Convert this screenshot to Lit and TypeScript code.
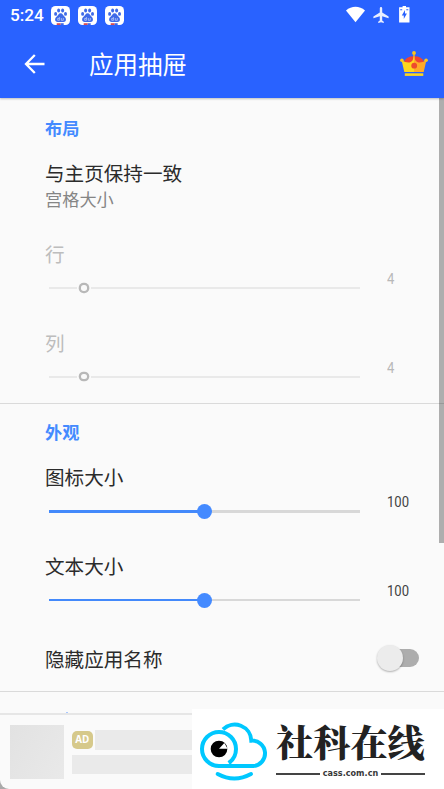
import { LitElement, html, css, svg } from "lit";
import { customElement, property } from "lit/decorators.js";

@customElement("slider-row")
class SliderRow extends LitElement {
  @property() label = "";
  @property({ type: Number }) value = 0;
  @property({ type: Number }) percent = 0;
  @property({ type: Boolean, reflect: true }) disabled = false;

  static styles = css`
    :host { display: grid; grid-template-columns: 342px 1fr; height: 88.7px; color: #2b2b2b; }
    .label { height: 26px; line-height: 26px; font-size: 19.6px; }
    .number { padding-top: 28px; font: 400 15.2px/20px Roboto, sans-serif; color: #424242; }
    .digits { display: inline-block; transform: scaleX(0.86); transform-origin: left; }
    .track { display: flex; align-items: center; height: 16px; margin: 13.5px 27px 0 4px; }
    .fill { height: 2.6px; background: #4389fb; }
    .knob { width: 15px; height: 15px; margin: 0 -7.5px; border-radius: 50%; background: #448aff; z-index: 1; flex: none; }
    .rest { flex: 1; height: 2.6px; background: #d8d8d8; }
    :host([disabled]) { color: #bdbdbd; }
    :host([disabled]) .number { color: #b8b8b8; }
    :host([disabled]) .track { margin-top: 13px; }
    :host([disabled]) .fill, :host([disabled]) .rest { background: #e9e9e9; height: 2.2px; }
    :host([disabled]) .knob { width: 5.4px; height: 5.4px; margin: 0 4.300px; background: #fafafa; box-shadow: 0 0 0 2.300px #b8b8b8; }
  `;

  render() {
    return html`
      <div>
        <div class="label">${this.label}</div>
        <div class="track">
          <div class="fill" style="width:${this.percent}%"></div>
          <div class="knob"></div>
          <div class="rest"></div>
        </div>
      </div>
      <div class="number"><span class="digits">${this.value}</span></div>
    `;
  }
}

const paw = () => svg`
  <rect width="19" height="19" rx="4.5" fill="#fff"/>
  <g fill="#3f6ae8">
    <ellipse cx="4.6" cy="7.9" rx="1.5" ry="1.9"/>
    <ellipse cx="7.6" cy="4.4" rx="1.5" ry="2"/>
    <ellipse cx="11.6" cy="4.4" rx="1.5" ry="2"/>
    <ellipse cx="14.5" cy="7.9" rx="1.5" ry="1.9"/>
    <path d="M9.6 7.3c2 0 2.5 2 3.8 3.1 2.4 2 2 5.5-.9 5.5H6.6c-3 0-3.3-3.6-.8-5.4C7.2 9.4 7.6 7.3 9.6 7.3z"/>
  </g>
  <path d="M8.4 11v3.4M8.4 12.4H6.7v1.9h1.7M10.3 12v2.3h2V12" fill="none" stroke="#dce5ff" stroke-width=".6"/>
  <path d="M5.7 17.2h4V19h-4z" fill="#d84b52"/>
  <path d="M9.7 17.2h3V19h-3z" fill="#3f6ae8"/>`;

@customElement("app-root")
class AppRoot extends LitElement {
  static styles = css`
    :host { display: block; width: 444px; height: 789px; overflow: hidden; font-family: "Noto Sans CJK SC", sans-serif; background: #fafafa; }
    .screen { position: relative; display: flex; flex-direction: column; height: 789px; }
    .header { flex: none; height: 98px; background: #2962ff; color: #fff; box-shadow: 0 1px 2px rgba(0,0,0,.25); z-index: 1; }
    .status { display: flex; align-items: center; height: 30px; padding: 0 30px 0 10px; }
    .time { width: 41px; font: 500 17.2px/30px Roboto, sans-serif; }
    .apps { display: flex; gap: 8px; flex: 1; }
    .signals { display: flex; align-items: center; margin-top: -2px; }
    .plane { margin: 2px 7px 0 8px; }
    .bar { display: flex; align-items: center; height: 68px; padding: 0 16px 0 24px; }
    .title { flex: 1; margin-left: 44px; font-size: 24.5px; line-height: 36px; font-weight: 400; }
    svg { display: block; flex: none; }
    .crown { margin-top: -1px; }
    .content { flex: none; height: 615px; overflow: hidden; }
    .section { box-sizing: border-box; padding-left: 45px; border-bottom: 1.5px solid #dadada; }
    .layout { height: 306px; padding-top: 17px; }
    .look { height: 287.5px; padding-top: 15px; }
    .heading { height: 26px; font-size: 17.2px; line-height: 26px; font-weight: 700; color: #448aff; }
    .item { padding: 19px 0 29px; color: #2b2b2b; }
    .name { font-size: 19.6px; line-height: 26px; color: #2b2b2b; }
    .hint { font-size: 17.2px; line-height: 26px; color: #858585; }
    .gap { height: 19px; }
    .toggle-row { display: flex; justify-content: space-between; align-items: center; height: 36px; padding-right: 25px; }
    .switch { display: flex; align-items: center; width: 41px; height: 18px; border-radius: 9px; background: linear-gradient(90deg, transparent 10px, #adadad 10px); margin-top: -3px; }
    .thumb { width: 26px; height: 26px; margin-left: -1px; border-radius: 50%; background: #ececec; box-shadow: 0 1px 2px rgba(0,0,0,.3); }
    .scroll { position: absolute; right: 0; top: 98px; width: 5px; height: 445px; background: rgba(0,0,0,.3); z-index: 2; }
    .peek { width: 2px; height: 1px; margin: 20px 0 0 65.5px; background: #a9c8ff; }
    .ad-shell { flex: 1; background: #aaa; }
    .ad { box-sizing: border-box; display: flex; height: 76px; padding: 10px 0 0 10px; border-top: 2px solid #e6e6e6; border-radius: 0 0 0 9px; background: #fafafa; }
    .picture { width: 54px; height: 54px; background: linear-gradient(120deg, #e2e2e2, #e9e9e9); }
    .lines { flex: 1; margin-left: 7.5px; }
    .line { display: flex; gap: 2px; padding-top: 5px; }
    .badge { width: 21.5px; height: 18px; margin-top: 1px; border-radius: 5px; background: #d6c98b; color: #fff; font: 700 9.8px/18.500px "Open Sans", sans-serif; text-align: center; }
    .bone { flex: 1; height: 20px; background: #eaeaea; }
    .second { height: 19px; margin-top: 5px; background: #eaeaea; }
    .watermark { position: absolute; right: 0; bottom: 0; z-index: 3; display: flex; width: 252px; height: 80px; background: #fff; }
    .brand { margin: 6px 0 0 4px; width: 152px; color: #222; }
    .brand-name { font: 900 37.2px/52px "Noto Serif CJK SC", "Noto Sans CJK SC", serif; white-space: nowrap; }
    .domain { display: flex; align-items: center; gap: 3px; width: 149px; font: 700 8.1px/12px "DejaVu Sans", sans-serif; color: #383838; }
    .rule { flex: 1; height: 2px; margin-top: 1px; background: #444; }
  `;

  render() {
    return html`
      <div class="screen">
        <div class="header">
          <div class="status">
            <div class="time">5:24</div>
            <div class="apps">
              ${[0, 1, 2].map(() => html`<svg width="19" height="19" viewBox="0 0 19 19">${paw()}</svg>`)}
            </div>
            <div class="signals">
              <svg width="19" height="17" viewBox="0 0 19 17"><path d="M0 4.5C5.5-.5 13.5-.5 19 4.5L9.5 16.2z" fill="#fff"/></svg>
              <svg class="plane" width="16" height="16" viewBox="1.5 2 20 20"><path d="M21 16v-2l-8-5V3.5a1.5 1.5 0 0 0-3 0V9l-8 5v2l8-2.5V19l-2 1.5V22l3.5-1 3.5 1v-1.5L13 19v-5.5z" fill="#e8eeff"/></svg>
              <svg width="18" height="17" viewBox="0 0 18 17">
                <path d="M6.6 0h3.4v1.2h3.5v15.2H3.1V1.2h3.5z" fill="#fff"/>
                <path d="M9 4L5.8 9.5h2V13L10.900 7.5H9zM4.200 3.2h2v1h-2zM10.300 3.2h2v1h-2z" fill="#2962ff"/>
              </svg>
            </div>
          </div>
          <div class="bar">
            <svg width="21" height="20" viewBox="0 0 21 20"><path d="M20.500 10H2M10.800 1L2 10l8.800 9" fill="none" stroke="#fff" stroke-width="2.3"/></svg>
            <div class="title">应用抽屉</div>
            <svg class="crown" width="28" height="26" viewBox="0 0 28 26">
              <path d="M3.800 11Q6 5.300 14 5.300Q22 5.300 24.200 11L20 15H8z" fill="#ee4433"/>
              <path d="M14 3v7" stroke="#fdb52b" stroke-width="1.4"/>
              <path d="M1.600 9.200Q6 12 9.500 11.500Q13.200 10.500 14 5V21H4.300z" fill="#fdd71d"/>
              <path d="M26.400 9.200Q22 12 18.500 11.500Q14.800 10.500 14 5V21h9.700z" fill="#ffaa28"/>
              <circle cx="1.900" cy="9.200" r="1.800" fill="#fdc51a"/><circle cx="26.100" cy="9.200" r="1.800" fill="#fdc51a"/><circle cx="14" cy="1.900" r="1.900" fill="#fdc51a"/>
              <circle cx="14.200" cy="14.700" r="2.900" fill="#ee4a2d"/>
              <path d="M4.800 22.300h18.500v2.600H4.800z" fill="#fdd71d"/>
            </svg>
          </div>
        </div>
        <div class="content">
          <div class="section layout">
            <div class="heading">布局</div>
            <div class="item">
              <div class="name">与主页保持一致</div>
              <div class="hint">宫格大小</div>
            </div>
            <slider-row label="行" .value=${4} .percent=${9} disabled></slider-row>
            <slider-row label="列" .value=${4} .percent=${9} disabled></slider-row>
          </div>
          <div class="section look">
            <div class="heading">外观</div>
            <div class="gap"></div>
            <slider-row label="图标大小" .value=${100} .percent=${50.1}></slider-row>
            <slider-row label="文本大小" .value=${100} .percent=${50.1}></slider-row>
            <div class="toggle-row">
              <div class="name">隐藏应用名称</div>
              <div class="switch"><div class="thumb"></div></div>
            </div>
          </div>
          <div class="peek"></div>
        </div>
        <div class="ad-shell">
          <div class="ad">
            <div class="picture"></div>
            <div class="lines">
              <div class="line"><div class="badge">AD</div><div class="bone"></div></div>
              <div class="second"></div>
            </div>
          </div>
        </div>
        <div class="scroll"></div>
        <div class="watermark">
          <svg width="80" height="80" viewBox="5 85 240 240">
            <g fill="none" stroke="#00c8ff" stroke-width="12">
              <path d="M115 247Q137 232 137 205A51 51 0 1 0 86 256H189A38 38 0 0 0 183 180A50 50 0 0 0 98 146"/>
              <path d="M82 280Q132 307 182 280" stroke-linecap="round"/>
            </g>
            <circle cx="86" cy="205" r="25" fill="#000"/>
            <path d="M86 204L102 187L112 204z" fill="#fff"/>
          </svg>
          <div class="brand">
            <div class="brand-name">社科在线</div>
            <div class="domain"><span class="rule"></span><span>cass.com.cn</span><span class="rule"></span></div>
          </div>
        </div>
      </div>
    `;
  }
}
